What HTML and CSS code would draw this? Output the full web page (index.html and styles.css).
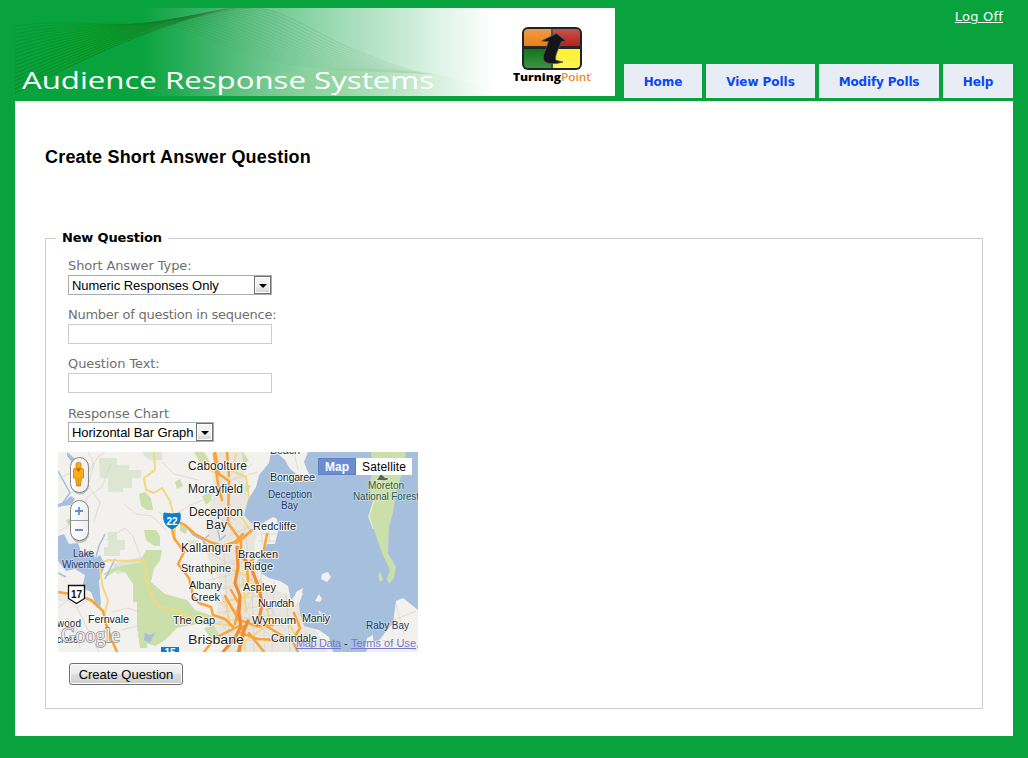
FILE: index.html
```html
<!DOCTYPE html>
<html lang="en">
<head>
<meta charset="utf-8">
<title>Create Short Answer Question</title>
<link rel="stylesheet" href="styles.css">
</head>
<body>
<div class="page">
  <header class="header">
    <svg class="banner" width="600" height="88" viewBox="0 0 600 88">
      <defs>
        <linearGradient id="fade">
          <stop offset="0" stop-color="#08a33d"/><stop offset=".21" stop-color="#08a33d"/>
          <stop offset=".31" stop-color="#37b263"/><stop offset=".4" stop-color="#62c387"/>
          <stop offset=".5" stop-color="#8ed5aa"/><stop offset=".62" stop-color="#bce6cc"/>
          <stop offset=".7" stop-color="#dcf2e4"/><stop offset=".8" stop-color="#fff"/>
        </linearGradient>
        <linearGradient id="wave" gradientUnits="userSpaceOnUse" x1="0" y1="0" x2="420" y2="0">
          <stop offset="0" stop-color="#087b1c"/><stop offset=".4" stop-color="#17772a" stop-opacity=".8"/>
          <stop offset=".52" stop-color="#4b8850" stop-opacity=".45"/><stop offset=".8" stop-color="#7da77a" stop-opacity=".35"/><stop offset="1" stop-color="#7da77a" stop-opacity="0"/>
        </linearGradient>
        <linearGradient id="glow"><stop offset="0" stop-color="#08a33d" stop-opacity="0"/><stop offset=".5" stop-color="#08a522" stop-opacity=".6"/><stop offset="1" stop-color="#08951c" stop-opacity=".6"/></linearGradient>
        <linearGradient id="hill"><stop offset="0" stop-color="#8ed090" stop-opacity="0"/><stop offset=".5" stop-color="#8ed090" stop-opacity=".5"/><stop offset="1" stop-color="#d5efdb" stop-opacity="0"/></linearGradient>
        <linearGradient id="gloss" x2="0" y2="1"><stop offset="0" stop-color="#fff" stop-opacity=".25"/><stop offset=".5" stop-color="#fff" stop-opacity="0"/><stop offset="1" stop-color="#fff" stop-opacity=".2"/></linearGradient>
      </defs>
      <rect width="600" height="88" fill="url(#fade)"/>
      <path d="M0 15C50 8 90 20 150 14L100 36 0 84z" fill="url(#glow)"/>
      <path d="M170 88C230 66 310 52 420 66C450 71 470 80 480 88z" fill="url(#hill)"/>
      <g id="waves" class="waves"></g>
      <text class="banner-title" x="7" y="81" textLength="412" lengthAdjust="spacingAndGlyphs">Audience Response Systems</text>
      <g>
        <rect x="507" y="19" width="60" height="43" rx="6" fill="#20242a"/>
        <path d="M509 38V25q0-4 4-4h23v17z" fill="#ea7b0c"/>
        <path d="M538 21h23q4 0 4 4v13h-27z" fill="#b41b10"/>
        <path d="M509 41h27v19h-23q-4 0-4-4z" fill="#107616"/>
        <path d="M538 41h27v15q0 4-4 4h-23z" fill="#fff12b"/>
        <rect x="509" y="21" width="56" height="39" rx="4" fill="url(#gloss)"/>
        <path d="M541.500 25.500L551 33 546.500 33.500C544 40 541 45 540.500 50Q540 52.500 543 52.800L548 54Q543 56 534 55.500Q527 54 528.500 47L533.500 33.500 526.500 33z" fill="#141519" stroke="#57575a" stroke-width=".8"/>
        <text class="brand" x="498" y="72.500" textLength="48" lengthAdjust="spacingAndGlyphs">Turning</text>
        <text class="brand brand-point" x="546" y="72.500" textLength="30" lengthAdjust="spacingAndGlyphs">Point</text>
        <circle cx="576" cy="66" r=".7" fill="#ee8b28"/>
      </g>
    </svg>
    <div class="header-side">
      <a class="logoff" href="#">Log Off</a>
      <nav class="tabs">
        <a class="tab tab-home" href="#">Home</a><a class="tab tab-view" href="#">View Polls</a><a class="tab tab-modify" href="#">Modify Polls</a><a class="tab tab-help" href="#">Help</a>
      </nav>
    </div>
  </header>
  <main class="content">
    <h1 class="title">Create Short Answer Question</h1>
    <fieldset class="panel">
      <legend class="legend">New Question</legend>
      <div class="fields">
        <div class="field"><label class="label" for="type">Short Answer Type:</label>
          <div class="select select-wide"><select id="type" class="select-input"><option>Numeric Responses Only</option></select><span class="arrow"></span></div></div>
        <div class="field"><label class="label label-long" for="num">Number of question in sequence:</label><input id="num" class="text-input"></div>
        <div class="field"><label class="label" for="txt">Question Text:</label><input id="txt" class="text-input"></div>
        <div class="field"><label class="label label-last" for="chart">Response Chart</label>
          <div class="select select-narrow"><select id="chart" class="select-input"><option>Horizontal Bar Graph</option></select><span class="arrow"></span></div></div>
      </div>
      <svg class="map" width="360" height="200" viewBox="0 0 360 200">
        <defs><linearGradient id="ctl"><stop offset="0" stop-color="#fff"/><stop offset="1" stop-color="#eee"/></linearGradient></defs>
        <rect width="360" height="200" fill="#f3f1ed"/>
        <!-- parks -->
        <g fill="#dde6d2">
          <path d="M41 6h18v7h12v5h12v8h-9v10h-9v4H50V26h-8zM84 0h20v8H92l-6-4zM50 80h9v8h8v10h-5v6H46v-9h4zM54 112l24-6 9-2v12l-28 6z"/>
          <path d="M110 150h9v14h-9zM130 88h10v12h-10zM262 0h-6l-20 8z"/>
        </g>
        <g fill="#cadfaa">
          <path d="M81 42l6-2 6 6 2 12-6 0-6-4zM86 78h12l4 6v10h-6l-8-6zM88 98h16l-2 11-6 7-3 14 14 12 22 6 8 10 18 6v10l-16-2-20 4-12 12-10 6-12-4-6-12V150h-4v-18l-8-12-8-2-9 6-5-2 12-7 24-4z"/>
          <path d="M136 0h10l6 10-8 4zM117 30l5-3 3 7-6 3zM122 70l8 4-2 8-6-3zM144 44l8-4 4 6-8 7zM176 2l9-2 6 9-9 3zM187 32l6 2-8 11zM146 176l14-4 8 12-14 6zM171 126l9 3-3 8-8-2zM180 140l7 2 2 8-8-2zM166 108l9-2 2 6-8 3zM244 189h9l3 8-8 3zM80 182h9v14h-7zM8 68l8-3 2 5-8 3z"/>
        </g>
        <g fill="#e8e6df"><path d="M158 0h26l4 40 12 30-4 30 6 30 38 18 12 20 18 32H170l-16-30 12-30-18-40z"/><path d="M0 140h8l4 9H0z"/></g>
        <!-- water -->
        <g fill="#a5bfdd">
          <path d="M213 0L211 11 201 23 198 35 190 48 186 63 193 71 203 72 215 65 219 67 220 79 217 92 209 92 205 101 198 111 203 121 211 126 222 129 230 134 232 144 233 148 241 139 245 141 241 152 242 161 246 174 261 178 271 185 275 200 308 200 313 190 321 188 335 171 338 149 345 146 360 158V0z"/>
          <path d="M0 84l6-2 5 10 9-1 4 12 8-5 6 8 4-3 5 10-6 16 2 24-4 3-6-16-9-4 3-13-10-6-9 2-8-10z"/>
          <path d="M0 52l6-2 7-6 4 3-4 6-8 1-5 1zM9 0l6 5 8 9 2 8-8-8-8-10zM87 181l5 2 6-3-4 6-2 5-6-3z"/>
        </g>
        <path d="M0 19l12 22-8 11M0 121l8 4M47 82l-6 12-3 11M47 127l10-20M129 75l6 8 10 5 8 10 8-2M151 83l-6 5 3 11M158 70l4 18 6-5M208 158l21-10" fill="none" stroke="#a5bfdd" stroke-width="1.500"/>
        <g fill="#f3f1ed">
          <path d="M218 0H250L246 10 249 18 255 29 246 28 232 17 227 8z"/>
          <path d="M264 122l6-2 3 5-4 5-6-3zM261 142l3 5-2 3-5-1zM260 158l4 3-2 2zM234 154l4-14 7-4-3 11-6 8zM309 186l6-3 1 14h-9z"/>
        </g>
        <path d="M313 0H348L345 18 338 41 335 60 331 75 330 101 338 115 336 126 331 132 329 127 332 118 324 101 316 78 310 65 315 48 311 35 315 18zM322 119l3 9-3 2-2-6z" fill="#cadfaa"/>
        <path d="M316 49l-5 15 4 13" fill="none" stroke="#eef0e6" stroke-width="1"/>
        <!-- minor streets -->
        <g class="street">
          <path d="M0 27l18-9 12 3 9-15 8-6M0 80l23-14 6-21 15-10 8-22M48 88l19-12 8 8 10 28M54 160l16-4 18 6M0 156l10-8 9 8 12 24 10 20M19 156l13-9 12 8M8 166l10 8 4 22M63 178l17-4 18 8 15-6M100 60l12 6 18-12 20-8M30 0l6 12-6 22 12 16-6 20M104 10l12 12 24 6M66 52l12 10 16 2 14 14"/>
          <path d="M150 100l22 12 22-3M152 115l40-10M150 128l44-10M156 138l44-8M158 151l46-8M160 161l50-8M160 170l54-7M156 184l70-14M160 192l90-10M166 100l6 100M181 94l1 106M193 100l3 100M203 120l4 80M216 130l-2 70M228 140l4 60M240 160l4 38M146 12l28 16 26-8M150 36l38 6M148 56l30 12M160 65l28 20M172 84l26-13M186 73l4 27M204 73v20M211 70v20M198 82h22M200 89h18M316 196l20-28 22-9M324 188l34 10M338 152l8 30M236 0l4 18"/>
          <path d="M152 120l18 36-8 14 22 28M168 102l28 40-8 18 30 30M176 130l32 20 20 28M154 146l32 20 38 8M144 4l20 22-8 22M194 12l-24 20"/>
        </g>
        <!-- arterial roads -->
        <g class="road road-yellow">
          <path d="M96 0l1 18-11 8 2 12 8 3 8-5 8 13 5 20v20"/>
          <path d="M42 118l2-8 7-2 17 1 18-1 3 10-2 8 8 20 6 9 18 3 15 8 12-2 8 7 22 3"/>
          <path d="M42 118l3 18 5 12-3 12M172 58l12 8 9 14M178 2l-4 17 14 6 3 21M162 24l-20-12M164 114l23 9 16 13M165 150l22-5 16-17M172 171l-4-19M188 160l-3-32M185 191l27-20-3-17M193 174l34-8 10 16M187 198l-2-24"/>
        </g>
        <g class="road road-orange">
          <path d="M0 140l19 3 14 5 12 11 3 13 5 14 6 14"/>
          <path d="M117 68l10 5 10 9 15 8 13 4 12-4 8-8"/>
          <path d="M114 76l2 10 10 14-6 12 11 14 4 18 6 7 12 4 2 8 12 4 8 8"/>
          <path d="M156 2l4 30 4 16M157 0l4 22 10 7-1 42 13 18M171 24l-2-24"/>
          <path d="M183 89v11l6 14 1 16M194 78l-9 8-7 5M209 82l-3 15-14 13"/>
          <path d="M167 144l14 24 18 6 16-1M181 174l-24 12-11 14M180 180l20 7 34 2 8-13-6-15M186 174l-6 26M191 181l15 19M208 174l27 16 5 10M177 172l4-20-8-14"/>
        </g>
        <g class="road road-motor">
          <path d="M179 95l1 20-3 16 5 13-1 17 2 15M182 100l12 18 7 18 3 16-4 21M182 176l-5 10-12 14M190 169l-4 9-5 22"/>
        </g>
        <!-- place names -->
        <g class="place">
          <text x="130" y="17.500" textLength="59">Caboolture</text><text x="130" y="40.500" textLength="55">Morayfield</text>
          <text x="131" y="63.500" textLength="54">Deception</text><text x="148" y="77" textLength="21">Bay</text>
          <text x="123" y="100" textLength="51">Kallangur</text>
          <text x="212" y="2" textLength="30" class="small">Beach</text>
        </g>
        <g class="place small">
          <text x="212" y="29" textLength="45">Bongaree</text><text x="195" y="78" textLength="43">Redcliffe</text>
          <text x="180" y="106" textLength="40">Bracken</text><text x="186" y="118" textLength="29">Ridge</text>
          <text x="123" y="120" textLength="50">Strathpine</text><text x="131" y="137" textLength="33">Albany</text><text x="133" y="149" textLength="29">Creek</text>
          <text x="185" y="139" textLength="33">Aspley</text><text x="200" y="155" textLength="36">Nundah</text>
          <text x="194" y="172" textLength="44" lengthAdjust="spacingAndGlyphs">Wynnum</text><text x="244" y="170" textLength="28">Manly</text>
          <text x="115" y="172" textLength="42">The Gap</text><text x="30" y="171" textLength="41">Fernvale</text>
          <text x="213" y="190" textLength="46">Carindale</text><text x="-1" y="175" textLength="24" class="tiny">wood</text>
          <text x="-1" y="191" textLength="21" class="tiny" lengthAdjust="spacingAndGlyphs">crose</text>
        </g>
        <text class="place big" x="130" y="192" textLength="56" lengthAdjust="spacingAndGlyphs">Brisbane</text>
        <g class="place small water-name">
          <text x="210" y="46" textLength="44">Deception</text><text x="223" y="57" textLength="17">Bay</text>
          <text x="308" y="177" textLength="43">Raby Bay</text>
          <text x="15" y="105" textLength="21">Lake</text><text x="4" y="116" textLength="43">Wivenhoe</text>
        </g>
        <g class="place small park-name">
          <path d="M323 22l4 4h3q0 3-6 2h-5l2-3z" fill="#526954"/>
          <text x="310" y="37" textLength="36">Moreton</text><text x="295" y="48" textLength="66">National Forest</text>
        </g>
        <!-- route shields -->
        <path d="M106 61q8 2 16 0 2 12-8 16-10-4-8-16z" fill="#087fce" stroke="#087fce"/>
        <text class="shield light" x="114" y="73" text-anchor="middle">22</text>
        <path d="M103 195h18v5h-18z" fill="#087fce"/><text class="shield light" x="112" y="204" text-anchor="middle">15</text>
        <path d="M10.500 133.500h16v13l-8 5-8-5z" fill="#fff" stroke="#111" stroke-width="1.300"/>
        <text class="shield" x="18.500" y="146" text-anchor="middle">17</text>
        <text class="google" x="3" y="190" textLength="59" lengthAdjust="spacingAndGlyphs">Google</text>
        <!-- street view and zoom controls -->
        <g fill="url(#ctl)" stroke="#858585">
          <rect x="13" y="6.500" width="18" height="36" rx="9" fill="#999" stroke="none" opacity=".6"/>
          <rect x="12.500" y="5.500" width="18" height="35" rx="9"/>
          <rect x="13" y="50" width="18" height="41" rx="9" fill="#999" stroke="none" opacity=".6"/>
          <rect x="12.500" y="48.500" width="18" height="40" rx="9"/>
        </g>
        <g fill="#f9ae13" stroke="#c57b12" stroke-width=".8">
          <path d="M15.500 18q0-2 2-2h6q2 0 2 2v8h-2l-1 8h-4l-1-8h-2z"/><rect x="18" y="10.500" width="5" height="5.500" rx="1.500"/>
        </g>
        <path d="M18 17h5l-2.500 3z" fill="#d95917"/><path d="M20.500 26v8" stroke="#c57b12" stroke-width=".8"/>
        <path d="M13 68.500h17" stroke="#9b9b9b"/>
        <path d="M17 59h8M21 55v8M17 78h8" stroke="#6c8ccc" stroke-width="1.800"/>
        <!-- map type switch -->
        <rect x="260" y="6" width="94" height="17" fill="#fff"/><rect x="260.500" y="6.500" width="37" height="16" fill="#6d8dd2" stroke="#5f80c5"/>
        <text class="switch on" x="267" y="19" textLength="24">Map</text><text class="switch" x="304" y="19" textLength="44">Satellite</text>
        <text class="credit" x="238" y="195" textLength="45">Map Data</text>
        <text class="credit dark" x="286" y="195">-</text>
        <text class="credit" x="293" y="195" textLength="65">Terms of Use</text>
        <path d="M238 196.500h45M293 196.500h65" stroke="#7777cc"/><text class="credit" x="358" y="195">,</text>
      </svg>
      <button class="button" type="button">Create Question</button>
    </fieldset>
  </main>
</div>
<script src="waves.js"></script>
</body>
</html>
```
FILE: styles.css
```css
* { box-sizing: border-box; }
body { margin: 0; background: #08a33d; font-family: "DejaVu Sans", Verdana, sans-serif; font-size: 13px; color: #000; }
.page { width: 998px; margin: 0 0 0 15px; padding-top: 8px; height: 758px; }
.header { display: flex; height: 93px; }
.banner { display: block; flex: none; }
.header-side { flex: 1; display: flex; flex-direction: column; justify-content: space-between; height: 90px; }
.logoff { align-self: flex-end; margin-right: 10px; color: #fff; line-height: 17px; letter-spacing: .2px; }
.tabs { display: flex; justify-content: flex-end; gap: 4px; }
.tab { height: 34px; line-height: 36px; text-align: center; white-space: nowrap; background: #e8edf5; color: #0b47f5; font-weight: bold; font-size: 12px; letter-spacing: -.05px; text-decoration: none; }
.tab-home { width: 78px; }
.tab-view { width: 109px; }
.tab-modify { width: 120px; letter-spacing: -.15px; }
.tab-help { width: 70px; }
.waves { fill: none; stroke: url(#wave); stroke-width: .8; }
.banner-title { font: 400 24px "Open Sans", "Noto Sans", sans-serif; fill: #fff; }
.brand { font: 800 10px "Open Sans", "Noto Sans", sans-serif; fill: #000; }
.brand-point { font-weight: 600; fill: #ee8b28; }

.content { height: 635px; background: #fff; padding: 45px 30px 0; }
.title { margin: 0; font: bold 18px/22px "Liberation Sans", Arial, sans-serif; letter-spacing: .2px; }
.panel { margin: 61px 0 0; padding: 11px 12px 23px; border: 1px solid #ccc; height: 480px; min-width: 0; }
.legend { height: 18px; line-height: 17px; padding: 0 6px; margin-left: -2px; font-weight: bold; white-space: nowrap; width: 112px; letter-spacing: -.17px; }
.fields { display: flex; flex-direction: column; gap: 12px; margin-left: 10px; }
.field { display: flex; flex-direction: column; height: 37px; }
.label { height: 17px; line-height: 15px; color: #707070; white-space: nowrap; letter-spacing: -.1px; }
.label-long { letter-spacing: -.26px; }
.label-last { line-height: 17px; }
.text-input { width: 204px; height: 20px; border: 1px solid #ccc; padding: 0 3px; background: #fff; }
.select { position: relative; height: 20px; }
.select-wide { width: 204px; }
.select-narrow { width: 146px; }
.select-input { appearance: none; width: 100%; height: 20px; margin: 0; padding: 0 3px; border: 1px solid #abadb3; border-radius: 0; background: #fff; color: #000; font: 13px "Liberation Sans", Arial, sans-serif; letter-spacing: -.03px; display: block; }
.arrow { position: absolute; right: 1px; top: 1px; width: 17px; height: 18px; border: 1px solid #707070; background: linear-gradient(#f2f2f2 50%, #d2d2d2); box-shadow: inset 0 0 0 1px #fff; pointer-events: none; }
.arrow::after { content: ""; position: absolute; left: 4px; top: 7px; border: 4px solid transparent; border-top-color: #000; border-bottom: 0; }
.map { display: block; margin-top: 10px; overflow: hidden; }
.button { display: block; margin: 11px 0 0 11px; width: 114px; height: 22px; padding: 0; border: 1px solid #707070; border-radius: 3px; background: linear-gradient(#f2f2f2, #ebebeb 50%, #ddd 50%, #cfcfcf); box-shadow: inset 0 0 0 1px #fcfcfc; color: #000; font: 13px "Liberation Sans", Arial, sans-serif; }

.street { fill: none; stroke: #d5d1c8; stroke-width: .7; }
.road { fill: none; stroke-linejoin: round; stroke-linecap: round; }
.road-yellow { stroke: #f4d77f; stroke-width: 2; }
.road-orange { stroke: #fba336; stroke-width: 2.500; }
.road-motor { stroke: #f28b32; stroke-width: 3.200; }
.place { font: 12px "Liberation Sans", Arial, sans-serif; fill: #222; stroke: #fff; stroke-width: 2px; stroke-opacity: .8; paint-order: stroke; stroke-linejoin: round; }
.place.small, .place .small { font-size: 11px; }
.place .tiny { font-size: 10px; }
.place.big { font-size: 13.500px; }
.place.water-name { font-size: 10px; fill: #283668; stroke-opacity: .25; }
.place.park-name { font-size: 10px; fill: #2f5a45; stroke-opacity: .3; }
.shield { font: bold 10px "Liberation Sans", Arial, sans-serif; fill: #111; }
.shield.light { fill: #fff; }
.switch { font: 12px "Liberation Sans", Arial, sans-serif; fill: #000; }
.switch.on { font-weight: bold; fill: #fff; }
.google { font: 21px "Liberation Serif", serif; fill: #eee; stroke: #8a8a8a; stroke-width: 1.400px; paint-order: stroke; }
.credit { font: 11px "Liberation Sans", Arial, sans-serif; fill: #7777cc; }
.credit.dark { fill: #222; }
```
FILE: waves.js
```js
// Blends between two boundary curves to draw the banner's fan of fine lines.
const first = [0, 85, 80, 45, 140, 18, 210, 1, 262, -9, 290, 22, 340, 42, 375, 56, 400, 65, 420, 66];
const last = [0, 18, 50, 10, 95, 20, 140, 15, 180, 20, 220, 46, 270, 56, 320, 64, 380, 64, 420, 66];
const group = document.getElementById("waves");
const count = 17;
for (let i = 0; i <= count; i++) {
  const t = i / count;
  const p = first.map((v, k) => (v + (last[k] - v) * t).toFixed(2));
  const path = document.createElementNS("http://www.w3.org/2000/svg", "path");
  path.setAttribute("d", `M${p[0]} ${p[1]}C${p.slice(2).join(" ")}`);
  path.setAttribute("opacity", (1 - t * 0.7).toFixed(2));
  group.appendChild(path);
}
```
